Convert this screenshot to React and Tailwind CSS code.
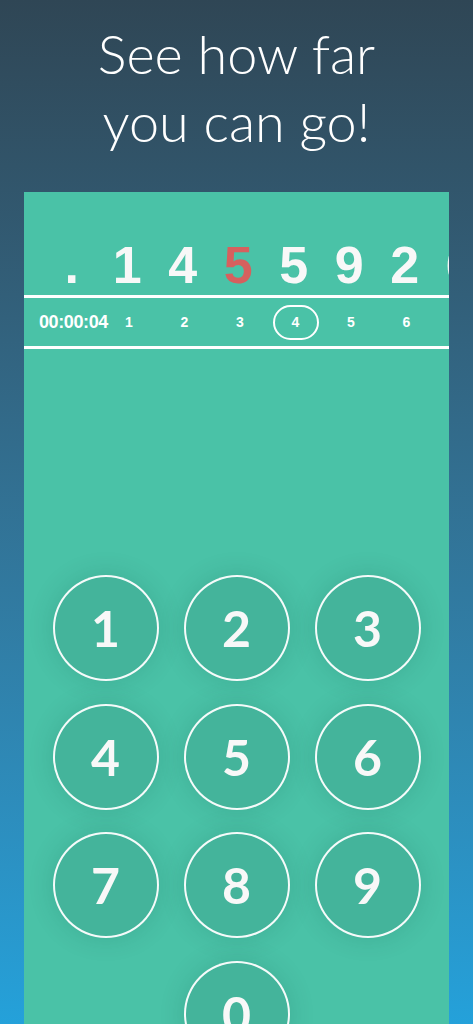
const trail = [
  { d: '.', red: false },
  { d: '1', red: false },
  { d: '4', red: false },
  { d: '5', red: true },
  { d: '5', red: false },
  { d: '9', red: false },
  { d: '2', red: false },
  { d: '6', red: false },
]

const steps = [1, 2, 3, 4, 5, 6]
const keys = ['1', '2', '3', '4', '5', '6', '7', '8', '9']

function Key({ n }) {
  return (
    <button className="flex h-[106px] w-[106px] items-center justify-center rounded-full border-[2.5px] border-white/95 bg-[#44b49b] text-[50px] font-bold leading-none text-[#f8f8f8] shadow-[0_0_26px_rgba(0,70,55,0.16)] [font-family:'Lato',sans-serif]">
      {n}
    </button>
  )
}

export default function App() {
  return (
    <div className="flex h-[1024px] w-full flex-col items-center overflow-hidden bg-gradient-to-b from-[#2f4655] to-[#24a1da]">
      <h1 className="shrink-0 pt-[20px] text-center text-[54px] font-light leading-[68px] text-white [font-family:'Lato',sans-serif]">
        See how far
        <br />
        you can go!
      </h1>

      <div className="mt-[36px] flex w-[425px] flex-1 flex-col overflow-hidden bg-[#4ac2a7]">
        <div className="flex shrink-0 pl-[20px] pt-[47px] text-[52px] font-bold leading-[52px] [font-family:'Liberation_Sans',sans-serif]">
          {trail.map((t, i) => (
            <span
              key={i}
              className={`w-[55.5px] shrink-0 text-center ${t.red ? 'text-[#d6605e]' : 'text-[#f8f8f8]'}`}
            >
              {t.d}
            </span>
          ))}
        </div>

        <div className="mt-[4px] h-[3px] shrink-0 bg-white" />
        <div className="flex h-[48px] shrink-0 items-center pl-[15px] text-white [font-family:'Liberation_Sans',sans-serif]">
          <span className="w-[72px] text-[18px] font-bold tracking-[-0.4px]">00:00:04</span>
          <div className="flex items-center gap-[19.5px]">
            {steps.map((s) =>
              s === 4 ? (
                <span
                  key={s}
                  className="-mx-[5px] flex h-[35px] w-[46px] items-center justify-center rounded-full border-2 border-white text-[14px] font-bold"
                >
                  {s}
                </span>
              ) : (
                <span key={s} className="w-[36px] text-center text-[14px] font-bold">
                  {s}
                </span>
              ),
            )}
          </div>
        </div>
        <div className="h-[3px] shrink-0 bg-white" />

        <div className="mt-[226px] grid shrink-0 grid-cols-[repeat(3,106px)] justify-center gap-x-[25px] gap-y-[22.5px]">
          {keys.map((k) => (
            <Key key={k} n={k} />
          ))}
          <div />
          <Key n="0" />
        </div>
      </div>
    </div>
  )
}
